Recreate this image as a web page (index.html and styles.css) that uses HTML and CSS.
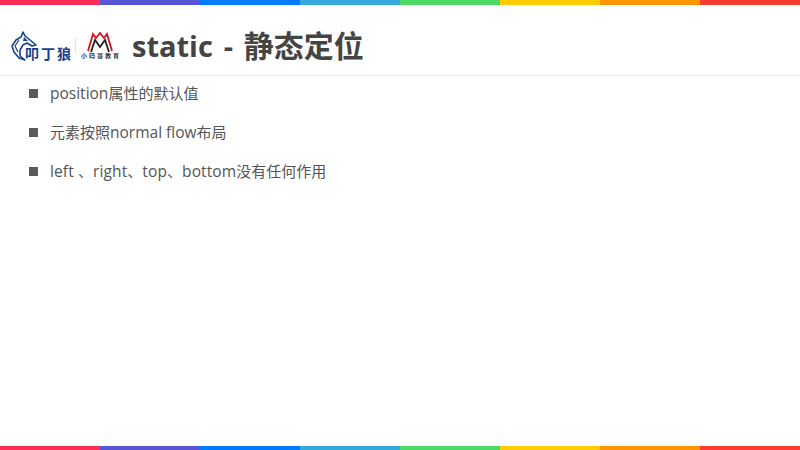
FILE: index.html
```html
<!DOCTYPE html>
<html lang="zh">
<head>
<meta charset="utf-8">
<title>static - 静态定位</title>
<link rel="stylesheet" href="styles.css">
</head>
<body>
<div class="rainbow rainbow-top">
  <i class="c1"></i><i class="c2"></i><i class="c3"></i><i class="c4"></i><i class="c5"></i><i class="c6"></i><i class="c7"></i><i class="c8"></i>
</div>
<header class="header">
  <div class="logos">
    <div class="logo-wolf">
      <svg class="wolf" width="26" height="30" viewBox="0 0 26 30">
        <path d="M12 1 L14 5 L19 9 L25 14 L21 15 L16 12 L12 14 L9 19 L9 25 L14 29 L8 27 L3 21 L1 15 L5 9 L10 6 Z" fill="none" stroke="#17418f" stroke-width="1.6" stroke-linejoin="round"/>
        <path d="M8 9 L4 15 L7 21" fill="none" stroke="#17418f" stroke-width="1.2"/>
        <path d="M13 6 L17 10 L12 10 Z" fill="#17418f"/>
      </svg>
      <span class="wolf-name">叩丁狼</span>
    </div>
    <div class="logo-sep"></div>
    <div class="logo-mg">
      <svg width="26" height="21" viewBox="0 0 26 21">
        <path d="M1 19 L6 2 L9 6 L13 1 L17 6 L20 2 L25 19" fill="none" stroke="#d0161c" stroke-width="1.8"/>
        <path d="M4 20 L8 8 L13 15 L18 8 L22 20" fill="none" stroke="#222" stroke-width="1.8"/>
      </svg>
      <span class="mg-name">小码哥教育</span>
    </div>
  </div>
  <h1 class="title"><span class="title-latin">static - </span>静态定位</h1>
</header>
<ul class="points">
  <li class="point"><span><span class="latin">position</span>属性的默认值</span></li>
  <li class="point"><span>元素按照<span class="latin">normal flow</span>布局</span></li>
  <li class="point"><span><span class="latin spaced">left </span>、<span class="latin spaced">right</span>、<span class="latin spaced">top</span>、<span class="latin spaced">bottom</span>没有任何作用</span></li>
</ul>
<div class="rainbow rainbow-bottom">
  <i class="c1"></i><i class="c2"></i><i class="c3"></i><i class="c4"></i><i class="c5"></i><i class="c6"></i><i class="c7"></i><i class="c8"></i>
</div>
</body>
</html>
```
FILE: styles.css
```css
* { box-sizing: border-box; }
html, body { margin: 0; padding: 0; }
body {
  width: 800px;
  height: 450px;
  overflow: hidden;
  background: #fff;
  display: flex;
  flex-direction: column;
  font-family: "Open Sans", "Noto Sans CJK SC", sans-serif;
  color: #555;
}
.rainbow { display: flex; flex: none; }
.rainbow i { flex: 1; display: block; }
.rainbow-top { height: 5px; }
.rainbow-bottom { height: 4px; margin-top: auto; }
.c1 { background: #ff2d55; }
.c2 { background: #5856d6; }
.c3 { background: #007aff; }
.c4 { background: #34aadc; }
.c5 { background: #4cd964; }
.c6 { background: #ffcc00; }
.c7 { background: #ff9500; }
.c8 { background: #ff3b30; }
.header {
  height: 71px;
  flex: none;
  display: flex;
  align-items: center;
  padding: 12px 0 0 11px;
  border-bottom: 1px solid #eee;
}
.logos { display: flex; align-items: center; width: 121px; flex: none; }
.logo-wolf { display: flex; align-items: flex-end; width: 64px; height: 30px; }
.wolf { flex: none; }
.wolf-name {
  margin-left: -12px;
  font-size: 14px;
  line-height: 15px;
  font-weight: 700;
  color: #17418f;
  letter-spacing: 2px;
  white-space: nowrap;
}
.logo-sep { width: 1px; height: 16px; background: #e4e4e4; }
.logo-mg { display: flex; flex-direction: column; align-items: center; width: 40px; margin-left: 4px; }
.mg-name {
  font-size: 6px;
  line-height: 7px;
  color: #333;
  white-space: nowrap;
  letter-spacing: 2px;
  margin-right: -2px;
  font-weight: 700;
}
.title {
  margin: 0;
  font-size: 30px;
  line-height: 40px;
  font-weight: 700;
  color: #444;
  white-space: nowrap;
}
.title-latin { font-size: 29px; word-spacing: 3.25px; }
.points {
  list-style: none;
  margin: 7px 0 0;
  padding: 0 0 0 29px;
  display: flex;
  flex-direction: column;
  gap: 19px;
}
.point {
  display: flex;
  align-items: center;
  gap: 12px;
  height: 20px;
  font-size: 15px;
  line-height: 20px;
  color: #555;
}
.point::before {
  content: "";
  width: 9px;
  height: 9px;
  background: #5a5a5a;
  flex: none;
}
.latin { font-size: 15.5px; }
.spaced { letter-spacing: 0.12px; }
```
